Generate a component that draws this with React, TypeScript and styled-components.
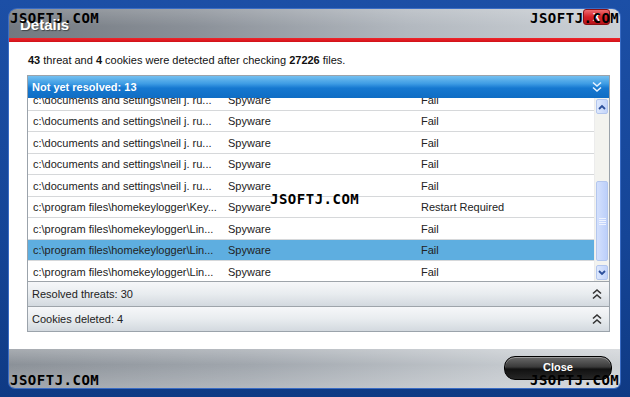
import React, { useLayoutEffect, useRef } from 'react';
import styled, { createGlobalStyle } from 'styled-components';

/// Types
type Row = { path: string; kind: string; status: string; selected?: boolean };

/// Data
const DOCS = 'c:\\documents and settings\\neil j. ru...';
const LIN = 'c:\\program files\\homekeylogger\\Lin...';

const ROWS: Row[] = [
  ...Array.from({ length: 9 }, () => ({ path: DOCS, kind: 'Spyware', status: 'Fail' })),
  { path: 'c:\\program files\\homekeylogger\\Key...', kind: 'Spyware', status: 'Restart Required' },
  { path: LIN, kind: 'Spyware', status: 'Fail' },
  { path: LIN, kind: 'Spyware', status: 'Fail', selected: true },
  { path: LIN, kind: 'Spyware', status: 'Fail' },
];

const MARKS: [number, number][] = [[10, 11], [530, 11], [270, 192], [10, 373], [530, 373]];

/// Global
const GlobalStyle = createGlobalStyle`
  html, body {
    margin: 0;
    padding: 0;
    background: #12408f;
  }
  body {
    font-family: "Liberation Sans", Arial, sans-serif;
  }
`;

/// Frame
const Screen = styled.div`
  position: relative;
  width: 630px;
  height: 397px;
  box-sizing: border-box;
  padding: 9px 10px 9px 9px;
  background: linear-gradient(180deg, #1c4fa6 0%, #154597 60%, #0f3a84 100%);
  overflow: hidden;
`;

const Window = styled.div`
  height: 100%;
  display: flex;
  flex-direction: column;
  border-radius: 8px 8px 6px 6px;
  overflow: hidden;
  box-shadow: 0 0 0 1px #3a6cc4;
`;

const TitleBar = styled.div`
  height: 29px;
  flex: none;
  display: flex;
  align-items: center;
  justify-content: space-between;
  padding: 0 10px 0 11px;
  background: linear-gradient(180deg, rgba(255, 255, 255, 0.18), rgba(255, 255, 255, 0) 60%),
  linear-gradient(90deg, #737980 0%, #8a9098 30%, #b2b8bf 65%, #ccd1d6 100%);
`;

const Title = styled.div`
  color: #fff;
  font-weight: bold;
  font-size: 15px;
  text-shadow: 1px 1px 1px rgba(0, 0, 0, 0.45);
  margin-top: 2px;
`;

const CloseX = styled.div`
  width: 25px;
  height: 14px;
  margin-top: -13px;
  border-radius: 3px;
  border: 1px solid #8a1014;
  background: linear-gradient(180deg, #ef6b6e, #d42027 50%, #b8141a);
  color: #fff;
  font: bold 11px "Liberation Sans", Arial, sans-serif;
  display: flex;
  align-items: center;
  justify-content: center;
`;

const RedRule = styled.div`
  height: 4px;
  flex: none;
  background: linear-gradient(180deg, #f0262c, #d01219);
`;

const Content = styled.div`
  flex: 1;
  background: #fff;
  padding: 12px 10px 0 18px;
  display: flex;
  flex-direction: column;
`;

const Summary = styled.div`
  font-size: 11px;
  line-height: 13px;
  color: #111;
  margin-bottom: 8px;
  margin-left: 1px;

  b {
    font-weight: bold;
  }
`;

/// Panel
const Panel = styled.div`
  border: 1px solid #9ba3ab;
  display: flex;
  flex-direction: column;
`;

const BlueHeader = styled.div`
  height: 22px;
  display: flex;
  align-items: center;
  justify-content: space-between;
  padding: 0 7px 0 4px;
  color: #fff;
  font-weight: bold;
  font-size: 11px;
  background: linear-gradient(180deg, #74c0f0 0%, #3e9ce4 35%, #1678d0 55%, #0f6dc4 100%);
`;

const ListArea = styled.div`
  height: 183px;
  display: flex;
`;

const Rows = styled.div`
  flex: 1;
  overflow: hidden;
`;

const ListRow = styled.div<{ $selected?: boolean }>`
  height: 21.5px;
  box-sizing: border-box;
  border-bottom: 1px solid #d6d8da;
  display: grid;
  grid-template-columns: 195px 193px 1fr;
  align-items: center;
  padding-left: 5px;
  padding-top: 1px;
  font-size: 11px;
  color: #222;
  background: ${ p => p.$selected ? '#5eaee0' : '#fff' };
  white-space: nowrap;
`;

/// Scrollbar
const Scrollbar = styled.div`
  width: 15px;
  background: #f3f3ef;
  border-left: 1px solid #ececec;
  display: flex;
  flex-direction: column;
  padding: 1px 0;
  box-sizing: border-box;
`;

const ScrollButton = styled.div`
  height: 15px;
  margin: 0 1px;
  border-radius: 2px;
  border: 1px solid #b3c6ee;
  background: linear-gradient(90deg, #dde8fd, #c3d4fa);
  display: flex;
  align-items: center;
  justify-content: center;
  box-sizing: border-box;
`;

const Track = styled.div`
  flex: 1;
  display: flex;
  flex-direction: column;
  justify-content: flex-end;
  padding: 0 0 4px;
`;

const Thumb = styled.div`
  height: 80px;
  margin: 0 1px;
  border-radius: 2px;
  border: 1px solid #b3c6ee;
  background: linear-gradient(90deg, #d3e0fd, #bccffa);
  display: flex;
  align-items: center;
  justify-content: center;
  box-sizing: border-box;
`;

const GrayRow = styled.div`
  height: 24px;
  border-top: 1px solid #9ea4aa;
  display: flex;
  align-items: center;
  justify-content: space-between;
  padding: 0 7px 0 4px;
  font-size: 11px;
  color: #222;
  background: linear-gradient(180deg, #f6f7f9 0%, #e8ecef 50%, #d3d9df 100%);
`;

/// Footer
const Footer = styled.div`
  height: 39px;
  flex: none;
  display: flex;
  align-items: center;
  justify-content: flex-end;
  padding-right: 8px;
  background: linear-gradient(180deg, rgba(255, 255, 255, 0.25) 0%, rgba(255, 255, 255, 0) 40%, rgba(255, 255, 255, 0.2) 100%),
  linear-gradient(90deg, #8b9198 0%, #a1a7ae 40%, #c2c7cc 80%, #cdd1d5 100%);
`;

const CloseButton = styled.div`
  width: 108px;
  height: 24px;
  margin-top: -1px;
  box-sizing: border-box;
  border-radius: 11px;
  border: 1px solid #000;
  background: linear-gradient(180deg, #6a6a6a 0%, #3a3a3a 45%, #111 55%, #262626 100%);
  box-shadow: inset 0 1px 0 rgba(255, 255, 255, 0.35);
  color: #fff;
  font-weight: bold;
  font-size: 11px;
  display: flex;
  justify-content: center;
  padding-top: 4px;
`;

/// Watermark
const Mark = styled.div`
  position: absolute;
  font-family: "DejaVu Sans Mono", monospace;
  font-weight: bold;
  font-size: 14px;
  line-height: 1;
  letter-spacing: 0.5px;
  color: #000;
  pointer-events: none;
`;

/// Icons
const DoubleChevron = ({ up, color }: { up?: boolean; color: string }) => (
  <svg width="10" height="12" viewBox="0 0 10 12">
    <g fill="none" stroke={ color } strokeWidth="1.6" transform={ up ? 'rotate(180 5 6)' : undefined }>
      <polyline points="1,1.5 5,5 9,1.5"/>
      <polyline points="1,6.5 5,10 9,6.5"/>
    </g>
  </svg>
);

const Arrow = ({ up }: { up?: boolean }) => (
  <svg width="8" height="6" viewBox="0 0 8 6">
    <polyline points={ up ? '1,5 4,2 7,5' : '1,1 4,4 7,1' } fill="none" stroke="#2c4f9a" strokeWidth="1.8"/>
  </svg>
);

const Grip = () => (
  <svg width="7" height="7" viewBox="0 0 7 7">
    { [0.5, 2.5, 4.5, 6.5].map(y => <line key={ y } x1="0" x2="7" y1={ y } y2={ y } stroke="#eef3ff"/>) }
  </svg>
);

/// App
export default function App() {
  const rowsRef = useRef<HTMLDivElement>(null);

  useLayoutEffect(() => {
    const el = rowsRef.current;
    if (el) {
      // list is scrolled to its bottom, last row sitting just above the edge
      el.scrollTop = el.scrollHeight - el.clientHeight - 2;
    }
  }, []);

  return (
    <Screen>
      <GlobalStyle/>
      <Window>
        <TitleBar>
          <Title>Details</Title>
          <CloseX>X</CloseX>
        </TitleBar>
        <RedRule/>
        <Content>
          <Summary>
            <b>43</b> threat and <b>4</b> cookies were detected after checking <b>27226</b> files.
          </Summary>
          <Panel>
            <BlueHeader>
              <span>Not yet resolved: 13</span>
              <DoubleChevron color="#e8f3ff"/>
            </BlueHeader>
            <ListArea>
              <Rows ref={ rowsRef }>
                { ROWS.map((r, i) => (
                  <ListRow key={ i } $selected={ r.selected }>
                    <span>{ r.path }</span>
                    <span>{ r.kind }</span>
                    <span>{ r.status }</span>
                  </ListRow>
                )) }
              </Rows>
              <Scrollbar>
                <ScrollButton><Arrow up/></ScrollButton>
                <Track>
                  <Thumb><Grip/></Thumb>
                </Track>
                <ScrollButton><Arrow/></ScrollButton>
              </Scrollbar>
            </ListArea>
            <GrayRow>
              <span>Resolved threats: 30</span>
              <DoubleChevron up color="#333"/>
            </GrayRow>
            <GrayRow>
              <span>Cookies deleted: 4</span>
              <DoubleChevron up color="#333"/>
            </GrayRow>
          </Panel>
        </Content>
        <Footer>
          <CloseButton>Close</CloseButton>
        </Footer>
      </Window>
      { MARKS.map(([x, y], i) => <Mark key={ i } style={ { left: x, top: y } }>JSOFTJ.COM</Mark>) }
    </Screen>
  );
}
